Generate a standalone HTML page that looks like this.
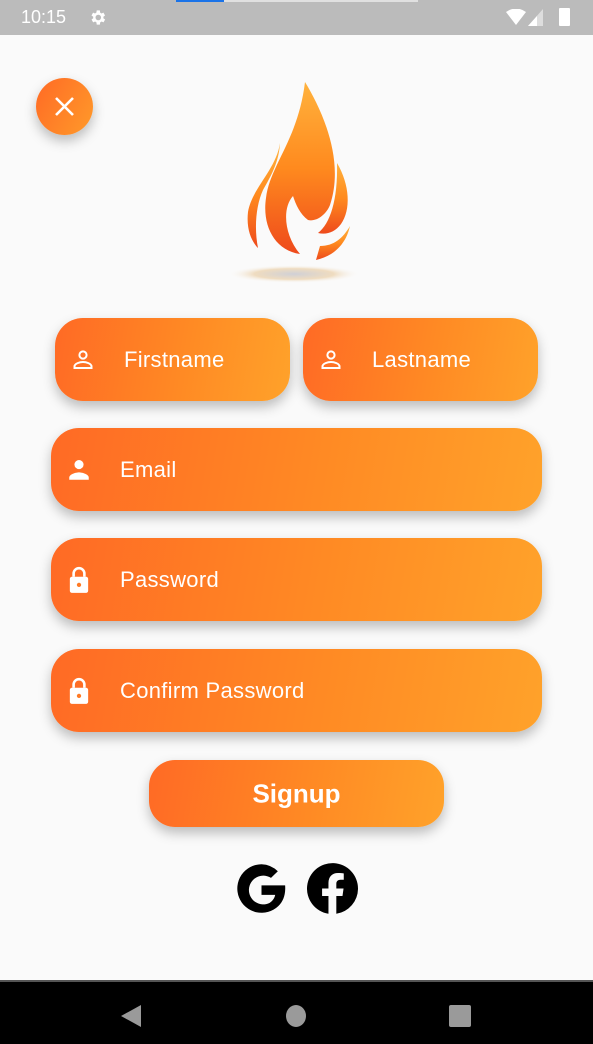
<!DOCTYPE html>
<html><head><style>
*{margin:0;padding:0;box-sizing:border-box}
body{width:593px;height:1044px;background:#fafafa;position:relative;overflow:hidden;font-family:"Liberation Sans",Roboto,sans-serif}
.sb{position:absolute;left:0;top:0;width:593px;height:35px;background:#bbbbbb;color:#fff}
.nav{position:absolute;left:0;top:982px;width:593px;height:62px;background:#000}
.f{position:absolute;border-radius:28px;background:linear-gradient(100deg,#ff6a25 0%,#ff8a24 55%,#ffa22a 100%);box-shadow:0 6px 12px rgba(0,0,0,.25);color:#fff;font-size:22px;letter-spacing:.3px}
.f span{position:absolute;top:50%;transform:translateY(-50%)}
.f svg{position:absolute;top:50%;transform:translateY(-50%)}
</style></head><body>
<div class="sb">
<div style="position:absolute;left:176px;top:0;width:48px;height:2px;background:#1a73e8"></div>
<div style="position:absolute;left:224px;top:0;width:194px;height:2px;background:#e0e0e0"></div>
<span style="position:absolute;left:21px;top:7px;font-size:18px">10:15</span>
<svg style="position:absolute;left:88px;top:8px" width="19" height="19" viewBox="0 0 24 24"><path fill="#fff" d="M19.4 13a7.5 7.5 0 000-2l2.1-1.6-2-3.5-2.5 1a7 7 0 00-1.7-1L15 3h-4l-.4 2.9a7 7 0 00-1.7 1l-2.5-1-2 3.5L6.6 11a7.5 7.5 0 000 2l-2.1 1.6 2 3.5 2.5-1a7 7 0 001.7 1L11 21h4l.4-2.9a7 7 0 001.7-1l2.5 1 2-3.5zM13 15.5a3.5 3.5 0 110-7 3.5 3.5 0 010 7z"/></svg>
<svg style="position:absolute;left:506px;top:9px" width="20" height="16" viewBox="0 0 20 16"><path fill="#fff" d="M0 3Q10-4 20 3L10 16Z"/></svg>
<svg style="position:absolute;left:528px;top:9px" width="16" height="17" viewBox="0 0 16 17"><path fill="#fff" d="M0 17L15 0V17Z" opacity=".5"/><path fill="#fff" d="M0 17L9 7V17Z"/></svg>
<div style="position:absolute;left:559px;top:8px;width:11px;height:18px;background:#fff;border-radius:1px"></div>
</div>

<div style="position:absolute;left:36px;top:78px;width:57px;height:57px;border-radius:50%;background:linear-gradient(120deg,#ff6a25,#ff9a2a);box-shadow:0 6px 12px rgba(0,0,0,.25)">
<svg style="position:absolute;left:17px;top:17px" width="23" height="23" viewBox="0 0 23 23"><path d="M3 3L20 20M20 3L3 20" stroke="#fff" stroke-width="2.6"/></svg>
</div>

<svg style="position:absolute;left:0;top:0" width="593" height="300">
<defs><linearGradient id="fl" x1="0" y1="0" x2="0" y2="1"><stop offset="0" stop-color="#ffb23d"/><stop offset=".5" stop-color="#ff8a1e"/><stop offset="1" stop-color="#ee4a1c"/></linearGradient>
<radialGradient id="sh"><stop offset="0" stop-color="#d0d0d6"/><stop offset=".6" stop-color="#efdcc0"/><stop offset="1" stop-color="#fafafa" stop-opacity="0"/></radialGradient></defs>
<ellipse cx="294" cy="274" rx="66" ry="9" fill="url(#sh)"/>
<path fill="url(#fl)" d="M305,82 C322,110 345,160 330,205 C326,215 316,222 308,220 C300,214 296,205 293,196 C282,208 284,235 300,254 C274,250 262,225 266,198 C270,165 298,140 305,82 Z"/>
<path fill="url(#fl)" d="M337,163 C350,185 351,210 341,224 C335,232 327,235 318,233 C330,224 338,200 337,163 Z"/>
<path fill="url(#fl)" d="M350,226 C346,244 334,256 316,260 L320,246 C334,246 343,238 350,226 Z"/>
<path fill="url(#fl)" d="M280,143 C276,170 252,188 248,212 C246,230 252,242 258,248 C254,228 256,205 263,190 C271,176 279,162 280,143 Z"/>
</svg>

<div class="f" style="left:55px;top:318px;width:235px;height:83px">
<svg style="left:16px" width="24" height="24" viewBox="0 0 24 24"><circle cx="12" cy="7" r="3.6" fill="none" stroke="#fff" stroke-width="2"/><path d="M3.5 20v-1.5c0-3 5.5-4.5 8.5-4.5s8.5 1.5 8.5 4.5V20z" fill="none" stroke="#fff" stroke-width="2"/></svg>
<span style="left:69px">Firstname</span></div>
<div class="f" style="left:303px;top:318px;width:235px;height:83px">
<svg style="left:16px" width="24" height="24" viewBox="0 0 24 24"><circle cx="12" cy="7" r="3.6" fill="none" stroke="#fff" stroke-width="2"/><path d="M3.5 20v-1.5c0-3 5.5-4.5 8.5-4.5s8.5 1.5 8.5 4.5V20z" fill="none" stroke="#fff" stroke-width="2"/></svg>
<span style="left:69px">Lastname</span></div>

<div class="f" style="left:51px;top:428px;width:491px;height:83px">
<svg style="left:15px" width="26" height="26" viewBox="0 0 24 24"><circle cx="12" cy="7" r="4.2" fill="#fff"/><path d="M3 21v-2c0-3 6-4.8 9-4.8s9 1.8 9 4.8v2z" fill="#fff"/></svg>
<span style="left:69px">Email</span></div>

<div class="f" style="left:51px;top:538px;width:491px;height:83px">
<svg style="left:15px" width="26" height="28" viewBox="0 0 24 26"><path d="M7 10V7a5 5 0 0110 0v3" fill="none" stroke="#fff" stroke-width="2.4"/><rect x="3.5" y="10" width="17" height="15" rx="2" fill="#fff"/><circle cx="12" cy="17.5" r="2" fill="#ff7a25"/></svg>
<span style="left:69px">Password</span></div>

<div class="f" style="left:51px;top:649px;width:491px;height:83px">
<svg style="left:15px" width="26" height="28" viewBox="0 0 24 26"><path d="M7 10V7a5 5 0 0110 0v3" fill="none" stroke="#fff" stroke-width="2.4"/><rect x="3.5" y="10" width="17" height="15" rx="2" fill="#fff"/><circle cx="12" cy="17.5" r="2" fill="#ff7a25"/></svg>
<span style="left:69px">Confirm Password</span></div>

<div class="f" style="left:149px;top:760px;width:295px;height:67px;border-radius:26px;font-size:26px;font-weight:bold;text-align:center;letter-spacing:0">
<span style="left:0;width:100%">Signup</span></div>

<svg style="position:absolute;left:235px;top:862px" width="53" height="53" viewBox="0 0 24 24"><path fill="#000" d="M12 1a11 11 0 107.6 19c2.3-2.2 3.4-5.4 3.1-9.4H12v4.3h6.2c-.3 1.6-1.3 2.8-2.5 3.6A6.5 6.5 0 1116.3 7.2l3.1-3A11 11 0 0012 1z"/></svg>
<svg style="position:absolute;left:307px;top:863px" width="51" height="51" viewBox="0 0 24 24"><path fill="#000" d="M24 12a12 12 0 10-13.9 11.9v-8.4H7.1V12h3V9.4c0-3 1.8-4.7 4.5-4.7 1.300 0 2.7.2 2.7.2v3h-1.5c-1.5 0-2 .9-2 1.9V12h3.4l-.5 3.5h-2.9v8.4A12 12 0 0024 12z"/></svg>

<div style="position:absolute;left:0;top:980px;width:593px;height:2px;background:#555"></div>
<div class="nav">
<svg style="position:absolute;left:120px;top:22px" width="22" height="24"><path d="M21 1V23L1 12Z" fill="#9a9a9a"/></svg>
<div style="position:absolute;left:286px;top:23px;width:20px;height:22px;border-radius:50%;background:#9a9a9a"></div>
<div style="position:absolute;left:449px;top:23px;width:22px;height:22px;border-radius:2px;background:#9a9a9a"></div>
</div>
</body></html>
